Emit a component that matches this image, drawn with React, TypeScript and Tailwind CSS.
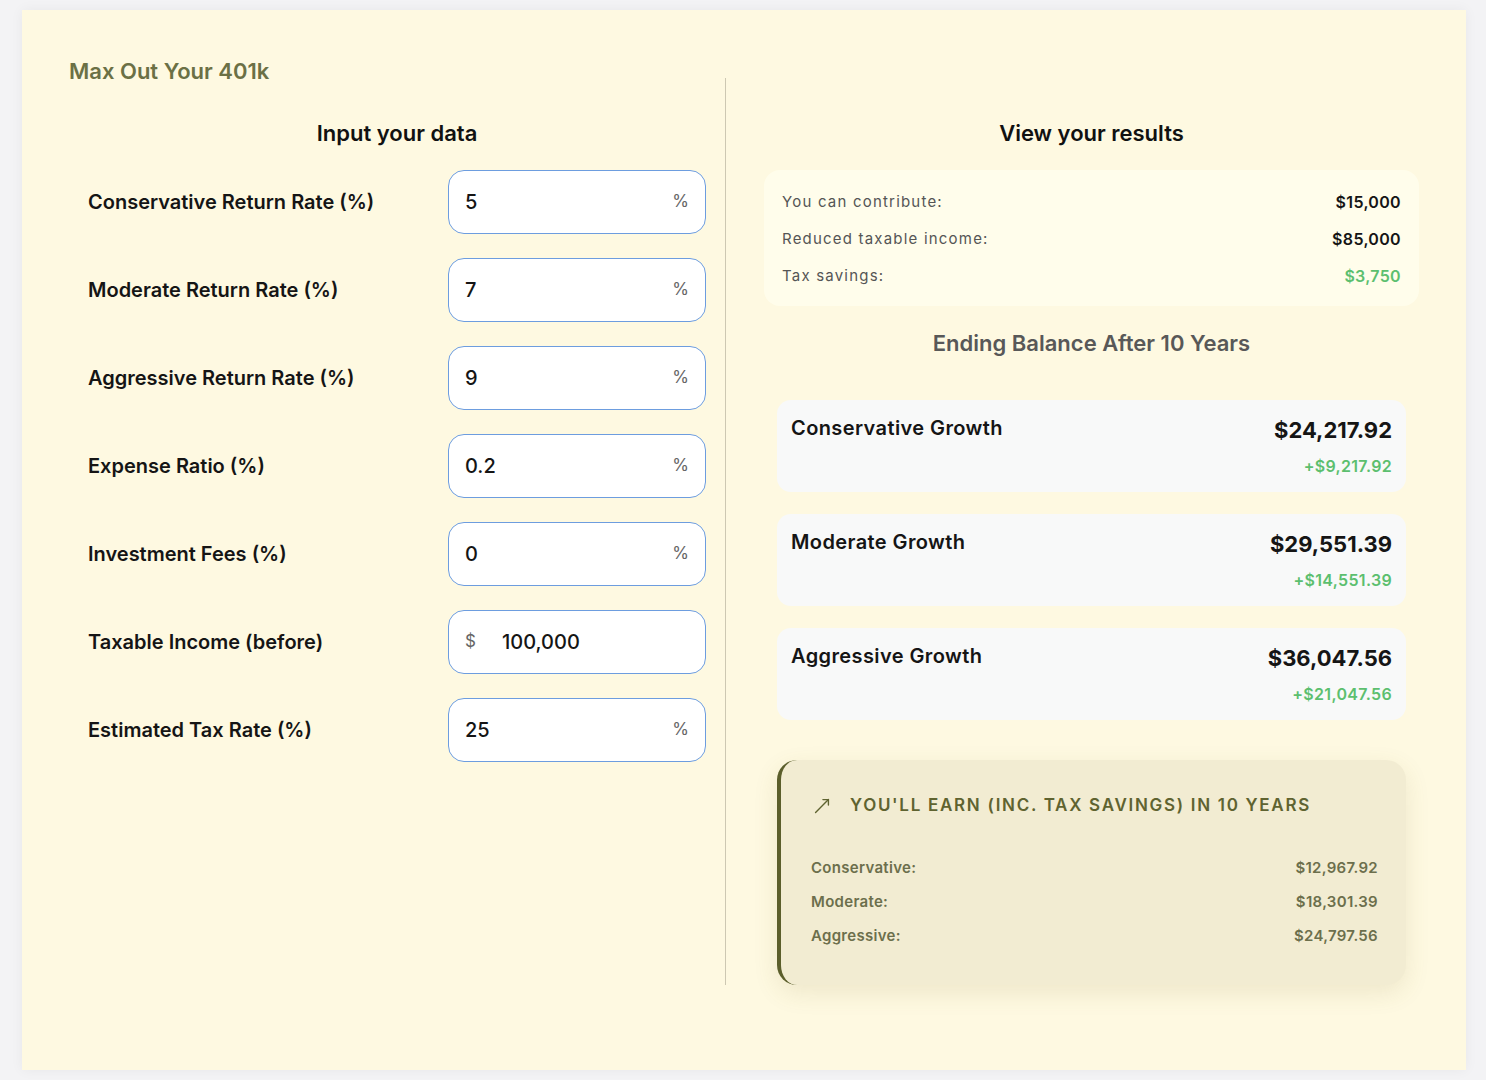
import { MoveUpRight } from "lucide-react";

const inputs = [
  { label: "Conservative Return Rate (%)", value: "5", suffix: "%" },
  { label: "Moderate Return Rate (%)", value: "7", suffix: "%" },
  { label: "Aggressive Return Rate (%)", value: "9", suffix: "%" },
  { label: "Expense Ratio (%)", value: "0.2", suffix: "%" },
  { label: "Investment Fees (%)", value: "0", suffix: "%" },
  { label: "Taxable Income (before)", value: "100,000", prefix: "$" },
  { label: "Estimated Tax Rate (%)", value: "25", suffix: "%" },
];

const growth = [
  { name: "Conservative Growth", total: "$24,217.92", gain: "+$9,217.92" },
  { name: "Moderate Growth", total: "$29,551.39", gain: "+$14,551.39" },
  { name: "Aggressive Growth", total: "$36,047.56", gain: "+$21,047.56" },
];

const earnings = [
  { label: "Conservative:", value: "$12,967.92" },
  { label: "Moderate:", value: "$18,301.39" },
  { label: "Aggressive:", value: "$24,797.56" },
];

export default function App() {
  return (
    <div
      className="min-h-screen bg-[#f3f3f5] pl-[22px] pr-[20px] pt-[10px]"
      style={{ fontFamily: "Inter, 'Noto Sans', sans-serif" }}
    >
      <div className="h-[1060px] bg-[#fef9e1] px-[47px] pt-[47px] shadow-[0_0_12px_rgba(0,0,0,0.05)]">
        {/* Title */}
        <h1 className="text-[22px] leading-[28px] font-semibold text-[#6b7045]">Max Out Your 401k</h1>

        <div className="grid grid-cols-[657px_1fr] mt-[-7px]">
          {/* Inputs */}
          <div className="border-r border-[#cdc8b2] pt-[40px] px-[19px]">
            <h2 className="text-center text-[22px] leading-[30px] font-semibold text-[#111]">Input your data</h2>
            <div className="mt-[22px] flex flex-col gap-[24px]">
              {inputs.map((item) => (
                <div key={item.label} className="flex items-center justify-between">
                  <span className="text-[20px] font-semibold text-[#151515]">{item.label}</span>
                  <div className="w-[258px] h-[64px] rounded-[16px] border border-[#6d9ddf] bg-white flex items-center px-[16px]">
                    {item.prefix && (
                      <span className="text-[17px] text-[#666] w-[37px]">{item.prefix}</span>
                    )}
                    <span className="flex-1 text-[20px] font-medium text-[#151515]">{item.value}</span>
                    {item.suffix && <span className="text-[17px] text-[#666]">{item.suffix}</span>}
                  </div>
                </div>
              ))}
            </div>
          </div>

          {/* Results */}
          <div className="pl-[38px] pt-[40px]">
            <h2 className="text-center text-[22px] leading-[30px] font-semibold text-[#111]">View your results</h2>
            <div className="mt-[22px] h-[136px] rounded-[16px] bg-[#fffdeb] px-[18px] pt-[21px] flex flex-col gap-[15px]">
              <div className="flex justify-between text-[15px] leading-[22px] tracking-[0.08em]">
                <span className="text-[#555]">You can contribute:</span>
                <span className="text-[16px] tracking-[0.02em] font-semibold text-[#151515]">$15,000</span>
              </div>
              <div className="flex justify-between text-[15px] leading-[22px] tracking-[0.08em]">
                <span className="text-[#555]">Reduced taxable income:</span>
                <span className="text-[16px] tracking-[0.02em] font-semibold text-[#151515]">$85,000</span>
              </div>
              <div className="flex justify-between text-[15px] leading-[22px] tracking-[0.08em]">
                <span className="text-[#555]">Tax savings:</span>
                <span className="text-[16px] tracking-[0.02em] font-semibold text-[#5cbf6f]">$3,750</span>
              </div>
            </div>

            <h3 className="mt-[22px] text-center text-[22px] leading-[30px] font-semibold text-[#585858]">
              Ending Balance After 10 Years
            </h3>

            <div className="mt-[42px] px-[13px] flex flex-col gap-[22px]">
              {growth.map((g) => (
                <div key={g.name} className="h-[92px] rounded-[14px] bg-[#f8f9f9] px-[14px] pt-[14px] flex justify-between">
                  <span className="text-[20px] leading-[28px] font-semibold tracking-[0.02em] text-[#151515]">{g.name}</span>
                  <div className="flex flex-col items-end">
                    <span className="text-[22px] leading-[32px] font-bold text-[#151515]">{g.total}</span>
                    <span className="mt-[9px] text-[16px] leading-[22px] font-semibold tracking-[0.02em] text-[#5cbf6f]">{g.gain}</span>
                  </div>
                </div>
              ))}
            </div>

            <div className="mt-[40px] mx-[13px] h-[225px] rounded-[20px] border-l-[4px] border-[#5b5e2b] bg-[#f2ecd2] pl-[30px] pr-[28px] pt-[33px] shadow-[0_8px_24px_rgba(120,110,40,0.12)]">
              <div className="flex items-center gap-[17px] text-[#5f6330]">
                <MoveUpRight className="w-[22px] h-[22px]" strokeWidth={1.5} />
                <span className="text-[17px] font-semibold tracking-[0.1em]">YOU'LL EARN (INC. TAX SAVINGS) IN 10 YEARS</span>
              </div>
              <div className="mt-[38px] flex flex-col gap-[12px]">
                {earnings.map((e) => (
                  <div key={e.label} className="flex justify-between text-[15px] leading-[22px] font-semibold text-[#6c6f4c] tracking-[0.02em]">
                    <span>{e.label}</span>
                    <span>{e.value}</span>
                  </div>
                ))}
              </div>
            </div>
          </div>
        </div>
      </div>
    </div>
  );
}
